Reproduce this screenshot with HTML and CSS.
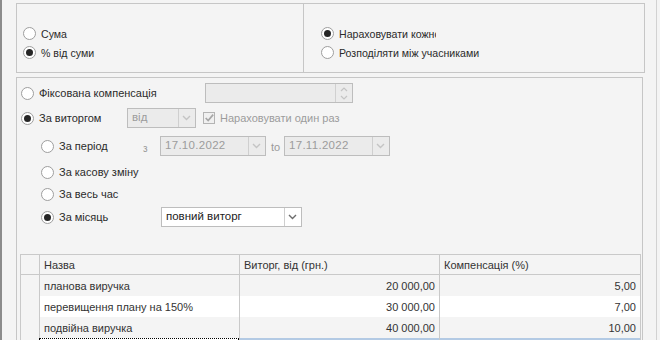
FILE: index.html
```html
<!DOCTYPE html>
<html lang="uk">
<head>
    <meta charset="UTF-8">
    <title>Компенсація</title>
    <link rel="stylesheet" href="styles.css">
</head>
<body>
    <div class="window">
        <div class="edge"></div>
        <div class="content">
            <!-- тип нарахування -->
            <div class="group top-group">
                <div class="col col-left">
                    <label class="opt"><span class="radio"></span>Сума</label>
                    <label class="opt"><span class="radio on"></span>% від суми</label>
                </div>
                <div class="col col-right">
                    <label class="opt"><span class="radio on"></span><span class="clip">Нараховувати кожного разу</span></label>
                    <label class="opt"><span class="radio"></span>Розподіляти між учасниками</label>
                </div>
            </div>

            <div class="group main-group">
                <div class="row row-fixed">
                    <label class="opt w-fixed"><span class="radio"></span>Фіксована компенсація</label>
                    <div class="field spin disabled">
                        <span class="value"></span>
                        <span class="spin-btns">
                            <svg width="8" height="5" viewBox="0 0 8 5"><polyline points="1,4 4,1 7,4" fill="none" stroke="#c4c4c4" stroke-width="1.2"/></svg>
                            <svg width="8" height="5" viewBox="0 0 8 5"><polyline points="1,1 4,4 7,1" fill="none" stroke="#c4c4c4" stroke-width="1.2"/></svg>
                        </span>
                    </div>
                </div>

                <div class="row row-revenue">
                    <label class="opt w-revenue"><span class="radio on"></span>За виторгом</label>
                    <div class="field combo disabled w-from">
                        <span class="value">від</span>
                        <span class="drop"><svg width="9" height="6" viewBox="0 0 9 6"><polyline points="1,1 4.5,4.5 8,1" fill="none" stroke="#c4c4c4" stroke-width="1.4"/></svg></span>
                    </div>
                    <label class="check disabled">
                        <span class="box"><svg width="12" height="10" viewBox="0 0 12 10"><polyline points="2,5 5,8 11,1" fill="none" stroke="#a6a6a6" stroke-width="2"/></svg></span>
                        Нараховувати один раз
                    </label>
                </div>

                <div class="sub">
                    <div class="row row-period">
                        <label class="opt w-period"><span class="radio"></span>За період</label>
                        <span class="hint w-z">з</span>
                        <div class="field combo disabled w-date">
                            <span class="value">17.10.2022</span>
                            <span class="drop"><svg width="9" height="6" viewBox="0 0 9 6"><polyline points="1,1 4.5,4.5 8,1" fill="none" stroke="#c4c4c4" stroke-width="1.4"/></svg></span>
                        </div>
                        <span class="hint w-to">to</span>
                        <div class="field combo disabled w-date">
                            <span class="value">17.11.2022</span>
                            <span class="drop"><svg width="9" height="6" viewBox="0 0 9 6"><polyline points="1,1 4.5,4.5 8,1" fill="none" stroke="#c4c4c4" stroke-width="1.4"/></svg></span>
                        </div>
                    </div>
                    <div class="row row-shift">
                        <label class="opt"><span class="radio"></span>За касову зміну</label>
                    </div>
                    <div class="row row-all">
                        <label class="opt"><span class="radio"></span>За весь час</label>
                    </div>
                    <div class="row row-month">
                        <label class="opt w-month"><span class="radio on"></span>За місяць</label>
                        <div class="field combo w-kind">
                            <span class="value">повний виторг</span>
                            <span class="drop"><svg width="9" height="6" viewBox="0 0 9 6"><polyline points="1,1 4.5,4.5 8,1" fill="none" stroke="#6d6d6d" stroke-width="1.4"/></svg></span>
                        </div>
                    </div>
                </div>

                <table class="grid">
                    <colgroup>
                        <col class="c-ind"><col class="c-name"><col class="c-sum"><col class="c-pct">
                    </colgroup>
                    <thead>
                        <tr><th></th><th>Назва</th><th>Виторг, від (грн.)</th><th>Компенсація (%)</th></tr>
                    </thead>
                    <tbody>
                        <tr><td class="ind"></td><td>планова виручка</td><td class="num">20 000,00</td><td class="num">5,00</td></tr>
                        <tr class="alt"><td class="ind"></td><td>перевищення плану на 150%</td><td class="num">30 000,00</td><td class="num">7,00</td></tr>
                        <tr><td class="ind"></td><td>подвійна виручка</td><td class="num">40 000,00</td><td class="num">10,00</td></tr>
                        <tr class="sel"><td class="ind"></td><td class="focus"></td><td></td><td></td></tr>
                    </tbody>
                </table>
            </div>
        </div>
        <div class="scroll-edge"></div>
    </div>
</body>
</html>
```

FILE: styles.css
```css
body {
    margin: 0;
    padding: 0;
    background-color: #f4f4f4;
    font-family: "Liberation Sans", Arial, sans-serif;
    font-size: 11px;
    color: #2b2b2b;
    overflow: hidden;
}

.window {
    display: flex;
    width: 660px;
    height: 340px;
    overflow: hidden;
}

.edge {
    width: 2px;
    background-color: #8c8c8c;
}

.content {
    width: 641px;
    padding: 3px 0 0 14px;
}

.scroll-edge {
    margin-left: 2px;
    width: 3px;
    border-left: 1px solid #d2d2d2;
}

.group {
    width: 627px;
    border: 1px solid #c6c6c6;
}

/* top group */
.top-group {
    display: flex;
    height: 68px;
    font-size: 10.6px;
}

.col {
    display: flex;
    flex-direction: column;
    padding-top: 20px;
}

.col-left {
    width: 280px;
    padding-left: 6px;
    border-right: 1px solid #c6c6c6;
}

.col-right {
    padding-left: 17px;
}

.opt {
    display: flex;
    align-items: center;
    height: 19px;
    white-space: nowrap;
}

.clip {
    display: inline-block;
    width: 97px;
    overflow: hidden;
}

.radio {
    position: relative;
    box-sizing: border-box;
    width: 13px;
    height: 13px;
    margin-right: 5px;
    border: 1px solid #9e9e9e;
    border-radius: 50%;
    background: #fff;
    flex-shrink: 0;
}

.radio.on::after {
    content: "";
    position: absolute;
    left: 2px;
    top: 2px;
    width: 7px;
    height: 7px;
    border-radius: 50%;
    background: #262626;
}

/* main group */
.main-group {
    margin-top: 4px;
    height: 280px;
    padding: 5px 0 0 4px;
    box-sizing: border-box;
}

.row {
    display: flex;
    align-items: center;
    height: 20px;
}

.row .opt {
    height: 20px;
}

.row-revenue { margin-top: 5px; }
.row-period { margin-top: 8px; }
.row-shift { margin-top: 6px; }
.row-all { margin-top: 2px; }
.row-month { margin-top: 3px; }

.sub {
    padding-left: 20px;
}

.w-fixed { width: 184px; }
.w-revenue { width: 106px; }
.w-period { width: 102px; }
.w-month { width: 120px; }

.hint {
    color: #9a9a9a;
}

.w-z {
    width: 17px;
    padding-top: 4px;
    font-size: 10px;
}

.w-to {
    width: 18px;
    padding-left: 5px;
    padding-top: 2px;
    box-sizing: border-box;
}

.field {
    display: flex;
    box-sizing: border-box;
    height: 20px;
    border: 1px solid #bdbdbd;
    background: #fff;
    font-size: 11.5px;
}

.field.disabled {
    background: #ebebeb;
    color: #9c9c9c;
}

.field .value {
    flex: 1;
    padding: 2px 4px 0 4px;
    white-space: nowrap;
}

.w-date .value {
    letter-spacing: 0.3px;
}

.spin {
    width: 148px;
}

.spin-btns {
    display: flex;
    flex-direction: column;
    justify-content: center;
    align-items: center;
    gap: 3px;
    width: 16px;
    border-left: 1px solid #d0d0d0;
}

.drop {
    display: flex;
    align-items: center;
    justify-content: center;
    width: 16px;
    border-left: 1px solid #cfcfcf;
}

.w-from { width: 69px; }
.w-date { width: 106px; }
.w-kind { width: 141px; }

.w-kind .value {
    color: #222;
}

.check {
    display: flex;
    align-items: center;
    margin-left: 7px;
    white-space: nowrap;
}

.check.disabled {
    color: #9c9c9c;
}

.check .box {
    display: flex;
    align-items: center;
    justify-content: center;
    box-sizing: border-box;
    width: 12px;
    height: 12px;
    margin-right: 5px;
    border: 1px solid #b4b4b4;
    background: #f0f0f0;
}

/* table */
.grid {
    margin: 27px 0 0 -1px;
    width: 621px;
    table-layout: fixed;
    border-collapse: collapse;
    border: 1px solid #c9c9c9;
    color: #333;
}

.c-ind { width: 19px; }
.c-name { width: 200px; }
.c-sum { width: 200px; }
.c-pct { width: 201px; }

.grid th,
.grid td {
    height: 21px;
    padding: 0 4px;
    border-left: 1px solid #c9c9c9;
    border-right: 1px solid #c9c9c9;
    font-weight: normal;
    text-align: left;
    white-space: nowrap;
    overflow: hidden;
}

.grid th {
    height: 19px;
    border-bottom: 1px solid #c9c9c9;
}

.grid .num {
    text-align: right;
}

.grid tr.alt td {
    background: #fff;
}

.grid tr.alt td.ind {
    background: #f4f4f4;
}

.grid tr.sel td {
    background: #b3cae4;
}

.grid tr.sel td.ind {
    background: #f4f4f4;
}

.grid tr.sel td.focus {
    background: #fff;
    outline: 1px dotted #000;
    outline-offset: -1px;
}
```
